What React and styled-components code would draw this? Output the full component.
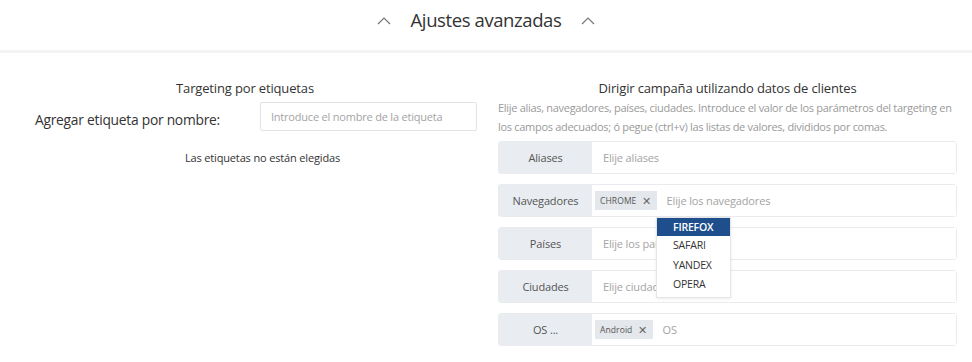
import React from "react";
import styled, { createGlobalStyle } from "styled-components";

const GlobalStyle = createGlobalStyle`
  body {
    margin: 0;
    background: #fff;
    font-family: "Open Sans", "Noto Sans", sans-serif;
    color: #333;
  }
`;

const Header = styled.div`
  height: 53px;
  box-sizing: border-box;
  display: flex;
  align-items: center;
  justify-content: center;
  gap: 20px;
  padding-bottom: 12px;
  border-bottom: 3px solid #f3f3f3;
`;

const HeaderTitle = styled.h2`
  margin: 0;
  font-size: 18.5px;
  font-weight: 400;
  color: #333;
  letter-spacing: -0.4px;
`;

const Chevron = () => (
  <svg width="14" height="8" viewBox="0 0 14 8" style={{ marginTop: 3 }}>
    <path d="M1 7 L7 1 L13 7" fill="none" stroke="#777" strokeWidth="1.2" />
  </svg>
);

const Content = styled.div`
  display: grid;
  grid-template-columns: 490px 459px;
  column-gap: 8px;
  padding-top: 26px;
`;

const LeftCol = styled.div`
  display: flex;
  flex-direction: column;
`;

const ColTitle = styled.div`
  text-align: center;
  font-size: 13px;
  color: #333;
  line-height: 18px;
  letter-spacing: -0.15px;
`;

const TagRow = styled.div`
  display: flex;
  align-items: center;
  padding-left: 35px;
  margin-top: 5px;
  gap: 40px;
`;

const TagLabel = styled.label`
  font-size: 13.8px;
  color: #333;
  padding-top: 6px;
  white-space: nowrap;
  letter-spacing: -0.25px;
`;

const TextInput = styled.input`
  width: 217px;
  height: 29px;
  box-sizing: border-box;
  border: 1px solid #e3e3e3;
  border-radius: 2px;
  padding: 0 10px;
  font-family: inherit;
  font-size: 11px;
  letter-spacing: -0.2px;
  outline: none;
  &::placeholder {
    color: #a4a4a4;
  }
`;

const EmptyNote = styled.div`
  text-align: center;
  font-size: 11px;
  letter-spacing: -0.15px;
  color: #333;
  margin-top: 19px;
  padding-left: 35px;
`;

const RightCol = styled.div`
  display: flex;
  flex-direction: column;
`;

const Description = styled.p`
  margin: 1px 0 5px;
  font-size: 11px;
  line-height: 19px;
  color: #9a9a9a;
  letter-spacing: -0.3px;
`;

const FieldList = styled.div`
  display: flex;
  flex-direction: column;
  gap: 10px;
`;

const Field = styled.div`
  position: relative;
  display: flex;
  height: 33px;
  border: 1px solid #e9ebee;
  border-radius: 3px;
  box-sizing: border-box;
`;

const FieldLabel = styled.div`
  width: 93px;
  flex-shrink: 0;
  background: #e9edf1;
  display: flex;
  align-items: center;
  justify-content: center;
  font-size: 11px;
  letter-spacing: -0.15px;
  color: #555;
`;

const FieldBody = styled.div`
  flex: 1;
  display: flex;
  align-items: center;
  padding-left: ${(p) => (p.$hasTags ? "3px" : "11px")};
  gap: 10px;
  background: #fff;
`;

const Placeholder = styled.span`
  font-size: 11px;
  letter-spacing: -0.15px;
  color: #a4a4a4;
`;

const Chip = styled.span`
  display: inline-flex;
  align-items: center;
  gap: 6px;
  height: 19px;
  padding: 0 5px;
  background: #e4e7eb;
  font-size: 8.5px;
  color: #555;
  letter-spacing: 0.1px;
`;

const ChipClose = styled.span`
  font-size: 11px;
  color: #666;
`;

const Dropdown = styled.ul`
  position: absolute;
  top: 32px;
  left: 157px;
  width: 73px;
  margin: 0;
  padding: 0 0 2px;
  list-style: none;
  background: #fff;
  border: 1px solid #e6e6e6;
  box-shadow: 0 1px 3px rgba(0, 0, 0, 0.08);
  z-index: 5;
`;

const Option = styled.li`
  height: ${(p) => (p.$active ? "18px" : "19.5px")};
  line-height: ${(p) => (p.$active ? "18px" : "19.5px")};
  padding-left: 16px;
  font-size: 10.5px;
  letter-spacing: -0.2px;
  color: ${(p) => (p.$active ? "#fff" : "#333")};
  background: ${(p) => (p.$active ? "#1e4e8c" : "transparent")};
  font-weight: ${(p) => (p.$active ? 600 : 400)};
`;

const fields = [
  { label: "Aliases", placeholder: "Elije aliases" },
  { label: "Navegadores", placeholder: "Elije los navegadores", tags: ["CHROME"], open: true },
  { label: "Países", placeholder: "Elije los países" },
  { label: "Ciudades", placeholder: "Elije ciudades" },
  { label: "OS ...", placeholder: "OS", tags: ["Android"] },
];

const browsers = ["FIREFOX", "SAFARI", "YANDEX", "OPERA"];

export default function App() {
  return (
    <>
      <GlobalStyle />
      <Header>
        <Chevron />
        <HeaderTitle>Ajustes avanzadas</HeaderTitle>
        <Chevron />
      </Header>
      <Content>
        <LeftCol>
          <ColTitle>Targeting por etiquetas</ColTitle>
          <TagRow>
            <TagLabel>Agregar etiqueta por nombre:</TagLabel>
            <TextInput placeholder="Introduce el nombre de la etiqueta" />
          </TagRow>
          <EmptyNote>Las etiquetas no están elegidas</EmptyNote>
        </LeftCol>
        <RightCol>
          <ColTitle>Dirigir campaña utilizando datos de clientes</ColTitle>
          <Description>
            Elije alias, navegadores, países, ciudades. Introduce el valor de los parámetros del targeting en
            los campos adecuados; ó pegue (ctrl+v) las listas de valores, divididos por comas.
          </Description>
          <FieldList>
            {fields.map((f) => (
              <Field key={f.label} style={{ zIndex: f.open ? 2 : 1 }}>
                <FieldLabel>{f.label}</FieldLabel>
                <FieldBody $hasTags={!!f.tags}>
                  {f.tags &&
                    f.tags.map((t) => (
                      <Chip key={t}>
                        {t}
                        <ChipClose>✕</ChipClose>
                      </Chip>
                    ))}
                  <Placeholder>{f.placeholder}</Placeholder>
                </FieldBody>
                {f.open && (
                  <Dropdown>
                    {browsers.map((b, j) => (
                      <Option key={b} $active={j === 0}>
                        {b}
                      </Option>
                    ))}
                  </Dropdown>
                )}
              </Field>
            ))}
          </FieldList>
        </RightCol>
      </Content>
    </>
  );
}
